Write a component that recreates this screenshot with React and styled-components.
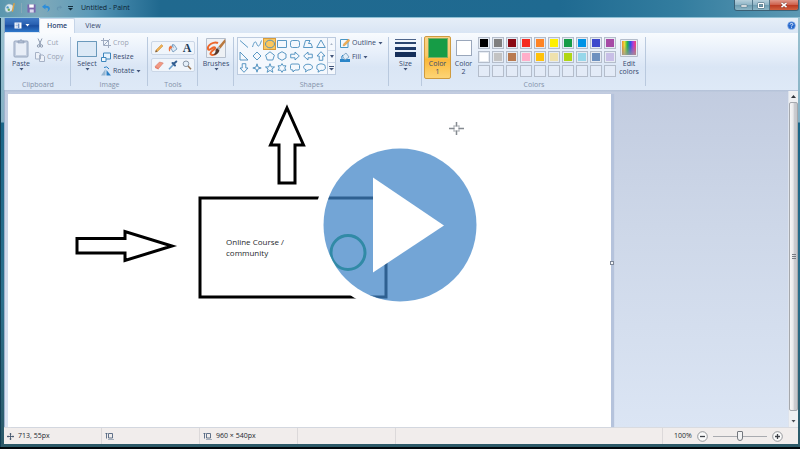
import React, { useState } from "react";
import styled, { createGlobalStyle, css } from "styled-components";

const GlobalStyle = createGlobalStyle`
  * { box-sizing: border-box; }
  body { margin: 0; background: #04131d; }
  button { font: inherit; color: inherit; background: none; border: 0; padding: 0; margin: 0; }
  svg { display: block; flex: none; }
`;

const ink = "#35496e";
const muted = "#9aa3b3";

const Frame = styled.div`
  position: relative;
  display: flex;
  flex-direction: column;
  min-height: 100vh;
  padding: 0 2px 5px 4px;
  background:
    linear-gradient(#02080c, #02080c) bottom / 100% 2px no-repeat,
    linear-gradient(#123f55, #123f55) left / 1px 100% no-repeat,
    linear-gradient(#9fc5d3 0, #8bb6c8 90px, #86b0c4 122px, #1b6688 123px, #2b6f8c 300px, #2c5967 100%);
  font: 7px/8px "Open Sans", "Noto Sans", sans-serif;
  color: ${ink};
`;

const TitleBar = styled.header`
  display: flex;
  align-items: flex-start;
  height: 18px;
  margin: 0 -2px 0 -4px;
  padding-left: 4px;
  border-bottom: 1px solid #8fc0d4;
  background: linear-gradient(90deg, #5a96ae 0, #7fa9ba 40px, #5c9ab8 90px, #3a7fa3 125px, #20698f 160px, #1f6a91 70%, #337d9f 85%, #5c98b3 100%);
`;

const QuickAccess = styled.div`
  display: flex;
  align-items: center;
  height: 16px;
  width: 72px;
  gap: 5px;
`;

const WindowTitle = styled.h1`
  flex: 1;
  margin: 0 0 0 5px;
  font: 7px/16px "Open Sans", "Noto Sans", sans-serif;
  color: #0b2233;
`;

const WindowButtons = styled.div`
  display: flex;
  height: 11px;
  margin-right: 1px;
  border: 1px solid #3b6075;
  border-top: 0;
  border-radius: 0 0 3px 3px;
  overflow: hidden;
`;

const WindowButton = styled.button`
  display: grid;
  place-items: center;
  width: ${(p) => (p.$close ? 29 : 17)}px;
  border-left: ${(p) => (p.$first ? 0 : "1px solid #52788c")};
  background: ${(p) =>
    p.$close
      ? "linear-gradient(#e09a8c 0, #cf6450 45%, #b93820 50%, #d0603f 100%)"
      : "linear-gradient(#b6d0dc 0, #91b6c7 45%, #6c9bb0 50%, #8cb6c6 100%)"};
`;

const TabRow = styled.nav`
  display: flex;
  height: 15px;
  background: linear-gradient(#e6eef8, #d9e5f4);
  border-left: 1px solid #86a5c4;
`;

const FileButton = styled.button`
  display: flex;
  align-items: center;
  justify-content: center;
  gap: 3px;
  width: 34px;
  height: 14px;
  background: linear-gradient(#3f79c6 0, #2961b2 45%, #1a4d9f 55%, #2f79cc 100%);
  color: #fff;
`;

const Tab = styled.button`
  width: 36px;
  height: 15px;
  color: ${ink};
  border-radius: 2px 2px 0 0;
  ${(p) =>
    p.$active &&
    css`
      background: #f9fbfe;
      border: 1px solid #c6d5e8;
      border-bottom: 0;
      color: #2b4470;
      font-weight: 600;
    `}
`;

const HelpButton = styled.button`
  margin: 0 2px 0 auto;
`;

const Ribbon = styled.section`
  display: flex;
  height: 57px;
  background: linear-gradient(#f8fbfe 0, #e7effa 35%, #dae6f5 60%, #dee9f7 100%);
  border-left: 1px solid #c3d3e6;
`;

const GroupBox = styled.section`
  display: flex;
  flex-direction: column;
  flex: none;
  width: ${(p) => p.$width}px;
  padding-top: 3px;
  background: linear-gradient(#b9c9de, #b9c9de) right 4px / 1px 49px no-repeat;
`;

const GroupBody = styled.div`
  display: flex;
  justify-content: ${(p) => p.$justify || "flex-start"};
  align-items: flex-start;
  height: 44px;
  padding: 0 ${(p) => p.$pad || 0}px;
  gap: ${(p) => p.$gap || 0}px;
`;

const GroupName = styled.h2`
  margin: 0;
  font: 7px/10px "Open Sans", "Noto Sans", sans-serif;
  text-align: center;
  color: #8492a9;
`;

const BigButton = styled.button`
  display: flex;
  flex-direction: column;
  align-items: center;
  flex: none;
  width: ${(p) => p.$width || 28}px;
  height: 43px;
  padding-top: 1px;
  color: ${ink};
  border: 1px solid ${(p) => (p.$active ? "#cf9b3f" : "transparent")};
  border-radius: 2px;
  ${(p) => p.$active && "background: linear-gradient(#fbd187 0, #fbc869 45%, #fbb83a 55%, #fdd576 100%);"}
`;

const IconSlot = styled.span`
  display: grid;
  place-items: center;
  height: 20px;
  margin-bottom: 2px;
`;

const Swatch = styled.span`
  width: ${(p) => p.$size}px;
  height: ${(p) => p.$size}px;
  background: ${(p) => p.$color};
  border: 1px solid ${(p) => p.$edge};
`;

const Stack = styled.div`
  display: flex;
  flex-direction: column;
`;

const SmallButton = styled.button`
  display: flex;
  align-items: center;
  gap: 2px;
  height: 14px;
  color: ${(p) => (p.disabled ? muted : ink)};
`;

const ToolPanels = styled(Stack)`
  gap: 3px;
  padding-top: 5px;
`;

const ToolPanel = styled.div`
  display: grid;
  grid-template-columns: repeat(3, 14px);
  height: 14px;
  place-items: center;
  border: 1px solid #cbd7e7;
  border-radius: 2px;
  background: #f0f5fb;
`;

const Gallery = styled.div`
  display: flex;
  width: 99px;
  height: 38px;
  margin-top: 1px;
  border: 1px solid #bccbdf;
  background: #f4f8fd;
`;

const ShapeGrid = styled.div`
  flex: 1;
  display: grid;
  grid-template-columns: repeat(7, 1fr);
  grid-template-rows: repeat(3, 12px);
`;

const ShapeButton = styled.button`
  display: grid;
  place-items: center;
  ${(p) => p.$active && "background: #fbc75e; box-shadow: inset 0 0 0 1px #d79b3c;"}
`;

const GalleryScroll = styled.div`
  display: grid;
  grid-template-rows: repeat(3, 1fr);
  width: 8px;
  border-left: 1px solid #bccbdf;
  & > button { display: grid; place-items: center; }
  & > button + button { border-top: 1px solid #cfdaea; }
`;

const Palette = styled.div`
  display: grid;
  grid-template-columns: repeat(10, 12px);
  grid-auto-rows: 12px;
  gap: 2px;
  margin: 1px 0 0 2px;
`;

const PaletteCell = styled.button`
  border: 1px solid #b4bdcb;
  background: ${(p) => p.$color || "#e3ebf7"};
  box-shadow: ${(p) => (p.$color ? "inset 0 0 0 1px #e6ebf2" : "none")};
`;

const Workspace = styled.main`
  flex: 1;
  display: flex;
  align-items: stretch;
  min-height: 0;
  padding: 4px 0 0 3px;
  border-left: 1px solid #9fb2cd;
  background:
    linear-gradient(#b4c1d8, #bfcbde) top / 100% 2px no-repeat,
    linear-gradient(#c2cce0 0, #cdd7e8 40%, #dbe5f4 100%);
`;

const Paper = styled.div`
  position: relative;
  flex: 0 1 603px;
  background: #fff;
  box-shadow: 3px 0 1px #b5c3dc;
`;

const Drawing = styled.svg`
  position: absolute;
  left: 0;
  top: 0;
`;

const CanvasText = styled.p`
  position: absolute;
  left: 218px;
  top: 142px;
  width: 80px;
  margin: 0;
  font: 8px/11px "Open Sans", "Noto Sans", sans-serif;
  color: #26282c;
`;

const ResizeHandle = styled.span`
  position: absolute;
  right: -3px;
  top: 50%;
  width: 4px;
  height: 4px;
  background: #f5f7fa;
  border: 1px solid #7d8797;
`;

const ScrollBar = styled.div`
  display: flex;
  flex-direction: column;
  width: 10px;
  margin: -3px 0 0 auto;
  background: #eff0f2;
  border-left: 1px solid #dde3ed;
`;

const ScrollArrow = styled.button`
  display: grid;
  place-items: center;
  height: 11px;
`;

const ScrollThumb = styled.div`
  flex: 1;
  display: grid;
  place-items: center;
  margin-bottom: 5px;
  border: 1px solid #a5a8ad;
  border-radius: 2px;
  background: linear-gradient(90deg, #f7f7f7 0, #eaeaec 45%, #cccdd1 60%, #c4c6ca 100%);
`;

const StatusBar = styled.footer`
  display: flex;
  height: 17px;
  border-top: 1px solid #d9dbe0;
  background: #f1edec;
  color: #23272e;
`;

const StatusCell = styled.div`
  display: flex;
  align-items: center;
  gap: 4px;
  width: ${(p) => p.$width}px;
  padding-left: 3px;
  border-right: 1px solid #dcd9da;
  ${(p) => p.$grow && "flex: 1;"}
`;

const ZoomArea = styled.div`
  display: flex;
  align-items: center;
  width: 135px;
  gap: 4px;
  padding-left: 11px;
`;

const ZoomLabel = styled.label`
  width: 19px;
`;

const ZoomSlider = styled.input`
  appearance: none;
  width: 56px;
  height: 11px;
  margin: 0;
  background: linear-gradient(#a9abb0, #a9abb0) center / 54px 1px no-repeat;
  &::-webkit-slider-thumb {
    appearance: none;
    width: 6px;
    height: 10px;
    border: 1px solid #74787e;
    border-radius: 1px 1px 3px 3px;
    background: #f3f3f4;
  }
`;

const PlayButton = styled.button`
  position: absolute;
  inset: 0;
  display: block;
  width: 172px;
  height: 172px;
  margin: auto;
  border-radius: 50%;
`;

const Caret = ({ color = "#43557a" }) => (
  <svg width="5" height="3" viewBox="0 0 5 3"><path d="M.5 0h4L2.5 2.6z" fill={color} /></svg>
);

const Icon = ({ w = 10, h = 10, box = "0 0 10 10", children }) => (
  <svg width={w} height={h} viewBox={box} fill="none" strokeLinejoin="round">{children}</svg>
);

const blue = "#4a8dbd";

const shapes = [
  ["Line", <path d="M1 1.5 9 8.5" />],
  ["Curve", <path d="M.5 8C3 0 4 3 5 5.500S7.500 8 9.500 1.500" />],
  ["Oval", <ellipse cx="5" cy="5" rx="4.500" ry="3.800" />],
  ["Rectangle", <rect x=".5" y="1.500" width="9" height="7" />],
  ["Rounded rectangle", <rect x=".5" y="1.500" width="9" height="7" rx="2" />],
  ["Polygon", <path d="M2.500 1.500H7L5.500 4.500H8L9.500 8.500H.5z" />],
  ["Triangle", <path d="M5 1 9.300 8.500H.7z" />],
  ["Right triangle", <path d="M1 1V9H9z" />],
  ["Diamond", <path d="M5 1 9 5 5 9 1 5z" />],
  ["Pentagon", <path d="M5 .8 9.400 4.200 7.800 9H2.200L.6 4.200z" />],
  ["Hexagon", <path d="M5 .7 9 3V7L5 9.300 1 7V3z" />],
  ["Right arrow", <path d="M.7 3.200H5V1L9.300 5 5 9V6.800H.7z" />],
  ["Left arrow", <path d="M9.300 3.200H5V1L.7 5 5 9V6.800H9.300z" />],
  ["Up arrow", <path d="M3.200 9.300V5H1L5 .7 9 5H6.800V9.300z" />],
  ["Down arrow", <path d="M3.200 .7V5H1L5 9.300 9 5H6.800V.7z" />],
  ["Four-point star", <path d="M5 .8 6 4 9.200 5 6 6 5 9.200 4 6 .8 5 4 4z" />],
  ["Five-point star", <path d="M5 .7 6.200 3.900 9.500 4 6.900 6 7.900 9.300 5 7.400 2.100 9.300 3.100 6 .5 4 3.800 3.900z" />],
  ["Six-point star", <path d="M5 .6 6.300 2.800H9L7.700 5 9 7.200H6.300L5 9.400 3.700 7.200H1L2.300 5 1 2.800H3.700z" />],
  ["Rounded callout", <path d="M2 1H8Q9.500 1 9.500 2.500V5.500Q9.500 7 8 7H5L3 9V7H2Q.5 7 .5 5.500V2.500Q.5 1 2 1z" />],
  ["Oval callout", <path d="M5 1.200C11 1.200 11 7 5 7L2.500 9 3 6.700C-1 5.500 .3 1.200 5 1.200z" />],
  ["Cloud callout", <path d="M3 1.200Q5 .4 7 1.200 9.400 1.500 9.200 3.500 10 5.500 8.500 6.600 7 8 5 7.300L2 9.200 2.500 7Q.2 6.500 .8 4.500 .2 1.800 3 1.200z" />],
];

const colors = [
  "#000000", "#7f7f7f", "#8a0914", "#f52a1f", "#ff8425", "#fff000", "#169c46", "#0093e6", "#3d49cc", "#a64ba6",
  "#ffffff", "#c3c3c3", "#b97a50", "#ffaec9", "#ffc20a", "#efe1ad", "#b0d615", "#97d7ea", "#6d90bf", "#c8bfe7",
];

const tools = [
  ["Pencil", <><path d="M1.500 9 2 7 7.500 1.500 9 3 3.500 8.500z" fill="#f0b154" stroke="#c98a35" strokeWidth=".5" /><path d="M1.300 9.200 2 7 3.500 8.500z" fill="#6d5b4c" /></>],
  ["Fill with color", <><path d="M2.500 4.500 6 1.500 9 6 5 9z" fill="#dce9f6" stroke="#6a92b8" strokeWidth=".8" /><path d="M1 8C.3 5 1 3 3 2.500L4.500 5C3 5 2 6 2 8.500z" fill="#ed7442" /><path d="M5 1Q3 2 5.500 4.500" stroke="#4a80ae" strokeWidth=".7" /></>],
  ["Text", null],
  ["Eraser", <><path d="M1 6.500 5.500 2 9.300 3 4.800 8.300z" fill="#f39a83" stroke="#cf705e" strokeWidth=".5" /><path d="M1 6.500 4.800 8.300 4.500 9.500 1.200 8z" fill="#e67662" /></>],
  ["Color picker", <><path d="M1 9.200 5.500 4.500" stroke="#6ea2cf" strokeWidth="1.600" /><path d="M4.500 3 7 5.500M5.500 4 8.300 1.500" stroke="#315d91" strokeWidth="2" strokeLinecap="round" /></>],
  ["Magnifier", <><circle cx="4" cy="3.800" r="2.800" fill="#e5f0fa" stroke="#8997a8" /><path d="M6 6 9 9.200" stroke="#967454" strokeWidth="1.500" /></>],
];

const TextToolLetter = styled.span`
  display: block;
  font: bold 12px/12px "Liberation Serif", serif;
  color: #1e3b59;
`;

const ToolButtons = ({ items }) => (
  <ToolPanel>
    {items.map(([name, drawing]) => (
      <button key={name} aria-label={name}>{drawing ? <Icon>{drawing}</Icon> : <TextToolLetter>A</TextToolLetter>}</button>
    ))}
  </ToolPanel>
);

const SizeMark = () => (
  <Icon w={9} h={8} box="0 0 9 8"><path d="M.5 1.500H2.500M1.500 1v5.500M3.500 1.500H7.500V6H3.500z" stroke="#50647f" strokeWidth=".9" /><path d="M3 7.500H9" stroke="#8493a8" strokeWidth=".7" /></Icon>
);

function Group({ name, width, children, ...body }) {
  return (
    <GroupBox $width={width}>
      <GroupBody {...body}>{children}</GroupBody>
      {name && <GroupName>{name}</GroupName>}
    </GroupBox>
  );
}

export default function App() {
  const [zoom, setZoom] = useState(50);
  const [shape, setShape] = useState("Oval");
  return (
    <>
      <GlobalStyle />
      <Frame>
        <TitleBar>
          <QuickAccess>
            <Icon w={12} h={12}><path d="M1 7C0 3 3 .8 6 2 9 3 8 7 5.500 8 3 9 1.500 8.500 1 7z" fill="#d6e7ee" stroke="#88a6b3" strokeWidth=".5" /><circle cx="3" cy="4.500" r="1" fill="#4b96c9" /><circle cx="4" cy="6.500" r="1" fill="#68a955" /><path d="M7 8 8.500 1" stroke="#dba144" strokeWidth="1.200" /></Icon>
            <svg width="1" height="10"><path d="M.5 0v10" stroke="#87a9b8" /></svg>
            <Icon w={9} h={9}><path d="M.5 .5H9.500V9.500H.5z" fill="#7a67ae" /><path d="M2.500 .5H7.500V4H2.500z" fill="#fff" /><path d="M3 6H7.500V9.500H3z" fill="#d9d8ed" /></Icon>
            <Icon><path d="M4.500 1 1 3.800 4.500 6.500V4.800C7.500 4.500 8 7 6 9 10.500 7 9.500 2.500 4.500 2.800z" fill="#2c8dda" /></Icon>
            <Icon w={7} h={8}><path d="M5.500 1 9 3.800 5.500 6.500V4.800C2.500 4.500 2 7 4 9-.5 7 .5 2.500 5.500 2.800z" fill="#6595b0" /></Icon>
            <Icon w={5} h={5} box="0 0 5 5"><path d="M0 .5H5" stroke="#122c3c" /><path d="M0 2H5L2.500 4.500z" fill="#122c3c" /></Icon>
          </QuickAccess>
          <WindowTitle>Untitled - Paint</WindowTitle>
          <WindowButtons>
            <WindowButton $first aria-label="Minimize"><Icon w={8} h={6} box="0 0 8 6"><path d="M1 3H7V5H1z" fill="#fff" stroke="#4b6676" strokeWidth=".5" /></Icon></WindowButton>
            <WindowButton aria-label="Maximize"><Icon w={8} h={7} box="0 0 8 7"><path d="M1.500 1.500H6.500V5.500H1.500z" stroke="#4b6676" strokeWidth="2" /><path d="M1.500 1.500H6.500V5.500H1.500z" stroke="#fff" strokeWidth="1.200" /></Icon></WindowButton>
            <WindowButton $close aria-label="Close"><Icon w={8} h={6} box="0 0 8 6"><path d="M1.500 .8 6.500 5.200M6.500 .8 1.500 5.200" stroke="#6e3026" strokeWidth="2.400" /><path d="M1.500 .8 6.500 5.200M6.500 .8 1.500 5.200" stroke="#fff" strokeWidth="1.600" /></Icon></WindowButton>
          </WindowButtons>
        </TitleBar>

        <TabRow>
          <FileButton aria-label="Paint menu">
            <Icon w={8} h={7} box="0 0 8 7"><path d="M.5 .5H7.500V6.500H.5z" fill="#fff" /><path d="M1.500 2H4M1.500 3.500H4M1.500 5H4" stroke="#7fa3d6" strokeWidth=".7" /><path d="M4.800 1.500V6" stroke="#2f62ab" /></Icon>
            <Caret color="#fff" />
          </FileButton>
          <Tab $active>Home</Tab>
          <Tab>View</Tab>
          <HelpButton aria-label="Help"><Icon w={9} h={9}><circle cx="5" cy="5" r="4.300" fill="#2668cc" stroke="#8eb3e8" strokeWidth=".7" /><path d="M3.500 4C3.500 2 6.800 2.200 6.400 4 6.200 4.800 5 5 5 6M5 7V8" stroke="#fff" /></Icon></HelpButton>
        </TabRow>

        <Ribbon aria-label="Ribbon">
          <Group name="Clipboard" width={66} $pad={2}>
            <BigButton>
              <IconSlot><Icon w={16} h={19} box="0 0 16 19"><rect x="1" y="2" width="14" height="16" rx="1" fill="#c4cfe0" stroke="#98a7bf" /><path d="M3 4H13V16H3z" fill="#e8eef7" /><path d="M5 4V2H6.500Q8-.8 9.500 2H11V4z" fill="#aebbd0" stroke="#8898b2" strokeWidth=".6" /></Icon></IconSlot>
              Paste
              <Caret />
            </BigButton>
            <Stack>
              <SmallButton disabled><Icon><path d="M3 .5 6 7M7 .5 4 7" stroke="#8e9bb0" /><circle cx="3.500" cy="8" r="1.200" stroke="#8e9bb0" /><circle cx="6.500" cy="8" r="1.200" stroke="#8e9bb0" /></Icon>Cut</SmallButton>
              <SmallButton disabled><Icon><path d="M.5 .5H4L5.500 2V7H.5zM4.500 3H8L9.500 4.500V9.500H4.500z" fill="#edf1f8" stroke="#a6b2c6" /></Icon>Copy</SmallButton>
            </Stack>
          </Group>

          <Group name="Image" width={77} $pad={2}>
            <BigButton>
              <IconSlot><Icon w={20} h={17} box="0 0 20 17"><path d="M.5 1.500H19.500V16.500H.5z" fill="#dce9f6" stroke="#82aac8" /><path d="M.5 1.500H19.500V16.500H.5z" stroke="#5288af" strokeDasharray="1 1" /></Icon></IconSlot>
              Select
              <Caret />
            </BigButton>
            <Stack>
              <SmallButton disabled><Icon><path d="M2.500 0V7.500H10M0 2.500H7.500V10M3 7 9 1" stroke="#9fabc0" /></Icon>Crop</SmallButton>
              <SmallButton><Icon><path d="M2.500 1H9.500V7H2.500z" fill="#e6f2fd" stroke="#3d86bd" /><path d="M.5 5.500H5V9.500H.5z" fill="#f3f8fd" stroke="#3d86bd" /></Icon>Resize</SmallButton>
              <SmallButton><Icon><path d="M0 9.500 4.500 3V9.500z" fill="#95b5d0" /><path d="M5.500 9.500V4L10 9.500z" fill="#2a7fc4" /><path d="M3 1.500Q6-.5 8 3" stroke="#2a7fc4" /></Icon>Rotate<Caret /></SmallButton>
            </Stack>
          </Group>

          <Group name="Tools" width={50} $justify="center">
            <ToolPanels>
              <ToolButtons items={tools.slice(0, 3)} />
              <ToolButtons items={tools.slice(3)} />
            </ToolPanels>
          </Group>

          <Group width={36} $justify="center">
            <BigButton $width={34}>
              <IconSlot><Icon w={20} h={20} box="0 0 20 20"><path d="M.5 .5H19.500V19.500H.5z" fill="#eef1f5" stroke="#b5bfcd" /><path d="M12 5C8 3 1 7 2 11 3 14 7 8 9 9.500 10.500 11 4 13 4.500 16 6 17.500 9 17 10 15.500" stroke="#ec672c" strokeWidth="2" /><path d="M19 1 12.500 8.500 14.500 10.500 19.500 4z" fill="#b9793f" /><path d="M12.500 8.500 14.500 10.500 13 12 11 10z" fill="#9ea6b0" /><path d="M11 10 13.500 12.500Q12 17 7 17 10 15 9.500 12z" fill="#54382c" /></Icon></IconSlot>
              Brushes
              <Caret />
            </BigButton>
          </Group>

          <Group name="Shapes" width={155} $pad={3} $gap={4}>
            <Gallery>
              <ShapeGrid>
                {shapes.map(([n, d]) => (
                  <ShapeButton key={n} aria-label={n} $active={n === shape} onClick={() => setShape(n)}>
                    <Icon><g stroke={blue} strokeWidth=".9">{d}</g></Icon>
                  </ShapeButton>
                ))}
              </ShapeGrid>
              <GalleryScroll>
                <button aria-label="Scroll up"><Icon w={3} h={2} box="0 0 4 3"><path d="M0 3H4L2 0z" fill="#a7b3c5" /></Icon></button>
                <button aria-label="Scroll down"><Icon w={4} h={3} box="0 0 4 3"><path d="M0 0H4L2 3z" fill="#43557a" /></Icon></button>
                <button aria-label="More shapes"><Icon w={5} h={5} box="0 0 5 5"><path d="M0 .5H5" stroke="#43557a" /><path d="M0 2H5L2.500 4.500z" fill="#43557a" /></Icon></button>
              </GalleryScroll>
            </Gallery>
            <Stack>
              <SmallButton><Icon><path d="M.5 1.500H8V9.500H.5z" fill="#f4f9fd" stroke="#4a96c3" /><path d="M3 8 3.500 6 8.500 1 10 2.500 5 7.500z" fill="#f2ae50" stroke="#c78a42" strokeWidth=".4" /></Icon>Outline<Caret /></SmallButton>
              <SmallButton><Icon><path d="M0 7H10V10H0z" fill="#2b86c9" /><path d="M2.500 4 6 1 9 5 5 8z" fill="#e0edf8" stroke="#6d98bd" strokeWidth=".8" /><path d="M2 7Q1 4 3 3" stroke="#2b86c9" /></Icon>Fill<Caret /></SmallButton>
            </Stack>
          </Group>

          <Group width={33} $justify="center">
            <BigButton>
              <IconSlot><Icon w={21} h={18} box="0 0 21 18"><path d="M0 .5H21" stroke="#4f668b" /><path d="M0 4H21" stroke="#2b4670" strokeWidth="2" /><path d="M0 9.500H21" stroke="#1e3a68" strokeWidth="3" /><path d="M0 15.500H21" stroke="#162f5a" strokeWidth="5" /></Icon></IconSlot>
              Size
              <Caret />
            </BigButton>
          </Group>

          <Group name="Colors" width={224} $pad={2}>
            <BigButton $width={27} $active>
              <IconSlot><Swatch $size={20} $color="#169c46" $edge="#7fae62" /></IconSlot>
              Color<br />1
            </BigButton>
            <BigButton $width={25}>
              <IconSlot><Swatch $size={16} $color="#fff" $edge="#9aa7bb" /></IconSlot>
              Color<br />2
            </BigButton>
            <Palette>
              {Array.from({ length: 30 }, (_, i) => <PaletteCell key={i} $color={colors[i]} aria-label={colors[i] || "Empty color"} />)}
            </Palette>
            <BigButton $width={26}>
              <IconSlot>
                <Icon w={18} h={18} box="0 0 18 18">
                  <defs>
                    <linearGradient id="spectrum"><stop offset="0" stopColor="#f08a2c" /><stop offset=".18" stopColor="#e8dc3a" /><stop offset=".38" stopColor="#24b84a" /><stop offset=".6" stopColor="#2a55e8" /><stop offset=".8" stopColor="#b83ad8" /><stop offset="1" stopColor="#f04a6a" /></linearGradient>
                    <linearGradient id="fade" x2="0" y2="1"><stop offset=".3" stopColor="#888" stopOpacity="0" /><stop offset="1" stopColor="#999" stopOpacity=".8" /></linearGradient>
                  </defs>
                  <path d="M.5 .5H17.500V17.500H.5z" fill="#e8ebf0" stroke="#b4bdcb" />
                  <path d="M2 2H16V16H2z" fill="url(#spectrum)" /><path d="M2 2H16V16H2z" fill="url(#fade)" />
                </Icon>
              </IconSlot>
              Edit<br />colors
            </BigButton>
          </Group>
        </Ribbon>

        <Workspace>
          <Paper>
            <Drawing width="480" height="260" viewBox="8 94 480 260" fill="none">
              <g stroke="#000" strokeWidth="3">
                <path d="M287 108 303.500 145H295V183H279V145H270.500z" />
                <path d="M77 238.500H125V231.500L172 246 125 260.500V253H77z" />
                <path d="M200 198H386V297H200z" />
              </g>
              <circle cx="348" cy="252.500" r="17" stroke="#0d9a50" strokeWidth="3" />
              <g stroke="#858a91"><path d="M456.500 122V126.500M456.500 130.500V135M449 128.500H454.500M458.500 128.500H464" strokeWidth="1.500" /><path d="M454 125.500V131.500M459 125.500V131.500M453.500 126H459.500M453.500 131H459.500" strokeWidth=".6" /></g>
            </Drawing>
            <CanvasText>Online Course / community</CanvasText>
            <ResizeHandle />
          </Paper>
          <ScrollBar>
            <ScrollArrow aria-label="Scroll up"><Icon w={5} h={3} box="0 0 5 3"><path d="M0 3H5L2.500 0z" fill="#30343b" /></Icon></ScrollArrow>
            <ScrollThumb><Icon w={4} h={5} box="0 0 4 5"><path d="M0 .5H4M0 2.500H4M0 4.500H4" stroke="#777b82" /></Icon></ScrollThumb>
            <ScrollArrow aria-label="Scroll down"><Caret color="#4b4f56" /></ScrollArrow>
          </ScrollBar>
        </Workspace>

        <StatusBar>
          <StatusCell $width={98}><Icon w={7} h={7} box="0 0 8 8"><path d="M4 0V8M0 4H8M3 1.200H5M3 6.800H5M1.200 3V5M6.800 3V5" stroke="#42546c" /></Icon>713, 55px</StatusCell>
          <StatusCell $width={98}><SizeMark /></StatusCell>
          <StatusCell $width={98}><SizeMark />960 × 540px</StatusCell>
          <StatusCell $width={98} />
          <StatusCell $grow />
          <ZoomArea>
            <ZoomLabel htmlFor="zoom">100%</ZoomLabel>
            <button aria-label="Zoom out"><Icon w={11} h={11} box="0 0 11 11"><circle cx="5.500" cy="5.500" r="4.800" fill="#fafafa" stroke="#7e8187" strokeWidth=".8" /><path d="M3 5.500H8" stroke="#3d4148" strokeWidth="1.300" /></Icon></button>
            <ZoomSlider id="zoom" type="range" min="0" max="100" value={zoom} onChange={(e) => setZoom(Number(e.target.value))} />
            <button aria-label="Zoom in"><Icon w={11} h={11} box="0 0 11 11"><circle cx="5.500" cy="5.500" r="4.800" fill="#fafafa" stroke="#7e8187" strokeWidth=".8" /><path d="M3 5.500H8M5.500 3V8" stroke="#3d4148" strokeWidth="1.300" /></Icon></button>
          </ZoomArea>
        </StatusBar>

        <PlayButton aria-label="Play video">
          <svg width="172" height="172" viewBox="0 0 172 172">
            <circle cx="86" cy="86" r="81" fill="none" stroke="#fff" strokeWidth="10" />
            <circle cx="86" cy="86" r="76.500" fill="#3f83c7" fillOpacity=".73" />
            <path d="M59 38.500 130 86.500 59 133.500z" fill="#fff" />
          </svg>
        </PlayButton>
      </Frame>
    </>
  );
}
